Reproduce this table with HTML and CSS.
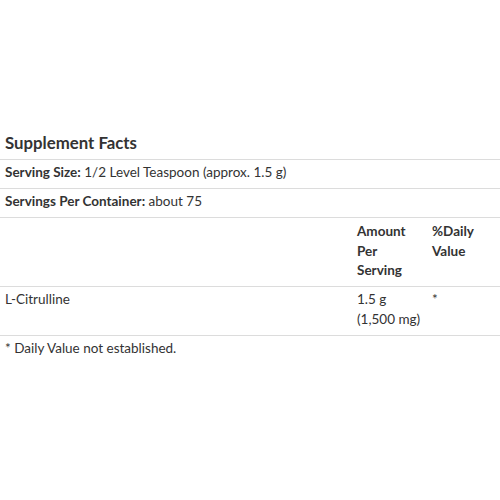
FILE: index.html
```html
<!DOCTYPE html>
<html>
<head>
<meta charset="utf-8">
<link rel="stylesheet" href="styles.css">
</head>
<body>
<div class="facts">
  <div class="title">Supplement Facts</div>
  <table class="table">
    <colgroup>
      <col class="c1"><col class="c2"><col class="c3">
    </colgroup>
    <tr><td colspan="3"><b>Serving Size:</b> 1/2 Level Teaspoon (approx. 1.5 g)</td></tr>
    <tr><td colspan="3"><b>Servings Per Container:</b> about 75</td></tr>
    <tr class="head"><td></td><td>Amount Per Serving</td><td>%Daily Value</td></tr>
    <tr><td>L-Citrulline</td><td class="amt">1.5 g<br>(1,500 mg)</td><td>*</td></tr>
  </table>
  <div class="note">* Daily Value not established.</div>
</div>
</body>
</html>
```

FILE: styles.css
```css
html, body {
  margin: 0;
  padding: 0;
  background: #fff;
}
body {
  font-family: Lato, "Open Sans", sans-serif;
  color: #333;
  font-size: 13.5px;
  line-height: 19.5px;
}
.facts {
  padding-top: 133px;
}
.title {
  font-size: 16.8px;
  font-weight: 700;
  line-height: 20px;
  padding: 0 5px 6px;
  border-bottom: 1px solid #dcdcdc;
}
.table {
  width: 100%;
  border-collapse: collapse;
  table-layout: fixed;
}
.c1 { width: 352px; }
.c2 { width: 75px; }
.c3 { width: 73px; }
.table td {
  padding: 3px 5px 5.5px;
  vertical-align: top;
  border-bottom: 1px solid #dcdcdc;
}
.table b {
  font-weight: 700;
}
.head td {
  font-weight: 700;
  padding-top: 4px;
}
.amt {
  white-space: nowrap;
}
.note {
  padding: 3px 5px;
}
```
